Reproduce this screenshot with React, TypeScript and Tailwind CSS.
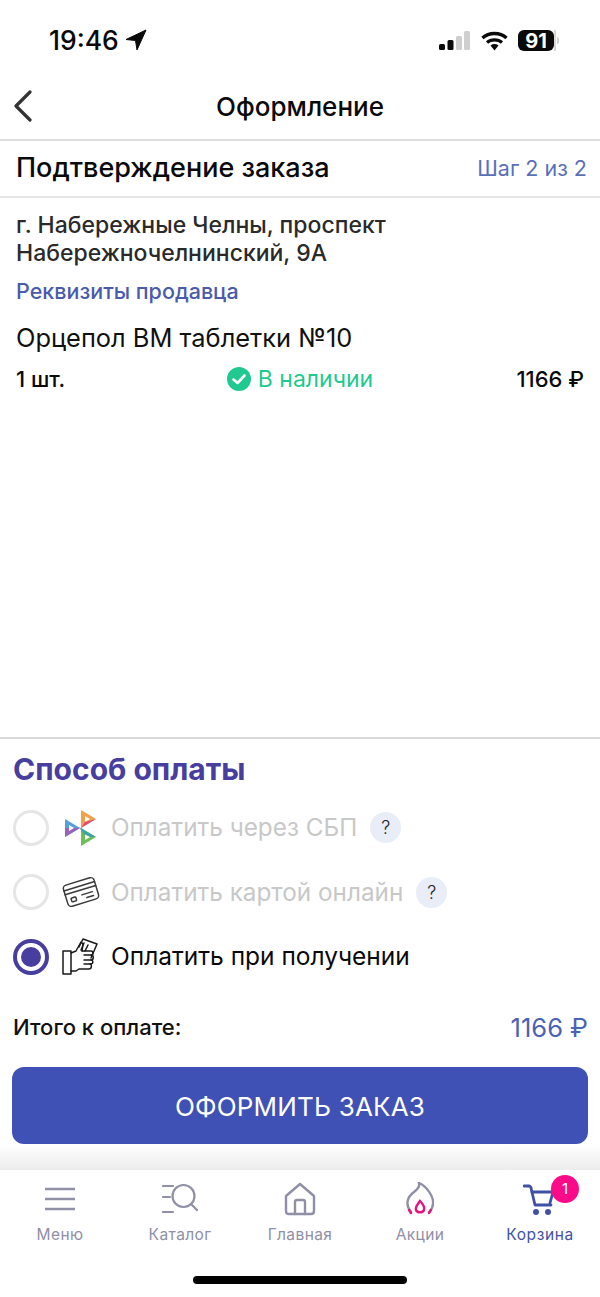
function LocationArrow() {
  return (
    <svg width="22" height="22" viewBox="0 0 22 22" className="ml-[6px]">
      <path d="M21 1 L1 10.5 L10.5 11.5 L12 21 Z" fill="#0a0a0a" stroke="#0a0a0a" strokeWidth="1" strokeLinejoin="round" />
    </svg>
  );
}

function StatusIcons() {
  return (
    <div className="flex items-center">
      <svg width="31" height="20" viewBox="0 0 31 20">
        <rect x="0" y="13" width="6" height="6" rx="1.5" fill="#0a0a0a" />
        <rect x="8.5" y="9" width="6" height="10" rx="1.5" fill="#0a0a0a" />
        <rect x="17" y="5" width="6" height="14" rx="1.5" fill="#cfcfcf" />
        <rect x="25" y="0" width="6" height="19" rx="1.5" fill="#cfcfcf" />
      </svg>
      <svg width="27" height="20" viewBox="0 0 27 20" className="ml-[11px]">
        <path d="M1.5 7 C8 1 19 1 25.5 7" fill="none" stroke="#0a0a0a" strokeWidth="3.4" />
        <path d="M6 11.5 C10 8 17 8 21 11.5" fill="none" stroke="#0a0a0a" strokeWidth="3.2" />
        <path d="M9.5 14.5 L13.5 19.5 L17.5 14.5 C15 12.6 12 12.6 9.5 14.5 Z" fill="#0a0a0a" />
      </svg>
      <div className="ml-[10px] flex items-center">
        <div className="flex h-[21px] w-[36px] items-center justify-center rounded-[6px] bg-[#0a0a0a] text-[20px] leading-none font-bold text-white">91</div>
        <div className="h-[21px] w-[2px] bg-[#d8d8d8]" />
        <div className="ml-[1px] h-[7px] w-[2px] rounded-r-sm bg-[#cfcfcf]" />
      </div>
    </div>
  );
}

function SbpLogo() {
  return (
    <svg width="31" height="36" viewBox="0 0 31 36">
      <polygon points="16,0 31,9 16,18" fill="#f0a24a" />
      <polygon points="20,6 25,9 20,12" fill="#fff" />
      <polygon points="20,12 31,9 16,18" fill="#e5487a" />
      <polygon points="0,9 15,18 0,27" fill="#5a9ed8" />
      <polygon points="0,18 15,18 0,27" fill="#9a62b8" />
      <polygon points="4,15 9,18 4,21" fill="#fff" />
      <polygon points="16,18 31,27 16,36" fill="#6cbf5a" />
      <polygon points="14,17 31,27 21,27" fill="#3fa4a0" />
      <polygon points="20,24.5 25,27 20,30" fill="#fff" />
    </svg>
  );
}

function CardIcon() {
  return (
    <svg width="38" height="34" viewBox="0 0 38 34" fill="none" stroke="#3a3a3a" strokeWidth="1.5" strokeLinecap="round" strokeLinejoin="round">
      <g transform="rotate(-17 19 17)">
        <rect x="3" y="6" width="32" height="22" rx="3.5" />
        <path d="M3 11 H35 M3 15 H35" />
        <rect x="7.5" y="20" width="5" height="4" rx="1" />
        <path d="M19 20 H30 M23 24 H30" />
      </g>
    </svg>
  );
}

function HandIcon() {
  return (
    <svg width="36" height="38" viewBox="0 0 36 38" fill="none" stroke="#1a1a1a" strokeWidth="1.5" strokeLinecap="round" strokeLinejoin="round">
      <path d="M1 13 H9 V36 H1 Z" />
      <path d="M9 15 L14 13 L19 4 L21 6 L20 13" />
      <path d="M17 9 L21 1 L35 6 L29 20" />
      <path d="M22 5 L19 12 M26 7 L23 13" />
      <path d="M20 13 H29 C31.5 13 31.5 17 29 17 H22" />
      <path d="M29 17 C32 17 32 22 29 22 H22" />
      <path d="M29 22 C31.5 22 31.5 26 28.5 26 H22" />
      <path d="M28 26 C30 26 30 31 27 31 H17 L14 33 H9" />
    </svg>
  );
}

function Radio({ checked }: { checked?: boolean }) {
  if (checked) {
    return (
      <div className="flex h-[36px] w-[36px] shrink-0 items-center justify-center rounded-full border-[4px] border-[#473e9f]">
        <div className="h-[20px] w-[20px] rounded-full bg-[#473e9f]" />
      </div>
    );
  }
  return <div className="h-[36px] w-[36px] shrink-0 rounded-full border-[3px] border-[#e6e6e6]" />;
}

function HelpBadge() {
  return (
    <div className="flex h-[31px] w-[31px] items-center justify-center rounded-full bg-[#e9edf7] text-[18px] font-light text-[#222]">?</div>
  );
}

function PayRow({ icon, iconClass, label, checked, help }: { icon: React.ReactNode; iconClass: string; label: string; checked?: boolean; help?: boolean }) {
  return (
    <div className="flex h-[64.5px] items-center">
      <Radio checked={checked} />
      <div className={iconClass}>{icon}</div>
      <span className={checked ? "text-[24.5px] text-[#0a0a0a]" : "text-[24.3px] text-[#c8c8c8]"}>{label}</span>
      {help && <div className="ml-[13px]"><HelpBadge /></div>}
    </div>
  );
}

function NavItem({ label, active, children }: { label: string; active?: boolean; children: React.ReactNode }) {
  return (
    <div className="flex w-[120px] flex-col items-center">
      <div className="flex h-[40px] items-center justify-center">{children}</div>
      <span className={active ? "mt-[6px] text-[15.5px] leading-[20px] font-normal tracking-[0.6px] text-[#3f51a5]" : "mt-[6px] text-[15.5px] leading-[20px] tracking-[0.4px] text-[#8f8fa6]"}>{label}</span>
    </div>
  );
}

export default function App() {
  return (
    <div className="flex h-[1297px] w-[600px] flex-col overflow-hidden bg-white font-['Inter','Liberation_Sans',sans-serif]">
      {/* status bar */}
      <div className="flex h-[72px] shrink-0 items-start justify-between pt-[23px] pr-[41px] pl-[49px]">
        <div className="flex items-center text-[26.5px] leading-[34px] font-medium text-[#0a0a0a]">
          19:46
          <LocationArrow />
        </div>
        <div className="pt-[7px]"><StatusIcons /></div>
      </div>

      {/* header */}
      <div className="relative flex h-[69px] shrink-0 items-center justify-center border-b-2 border-[#dedede] pt-[2px]">
        <svg width="20" height="32" viewBox="0 0 20 32" fill="none" stroke="#333" strokeWidth="3.2" strokeLinecap="round" strokeLinejoin="round" className="absolute top-[18px] left-[13px]">
          <path d="M17 2 L3 16 L17 30" />
        </svg>
        <span className="text-[26px] font-medium text-[#0a0a0a]">Оформление</span>
      </div>

      {/* step */}
      <div className="flex h-[57px] shrink-0 items-center justify-between border-b-2 border-[#e6e6e6] pr-[13px] pl-[16px]">
        <span className="text-[27px] font-medium text-[#0a0a0a]">Подтверждение заказа</span>
        <span className="text-[21.5px] text-[#5b6fb8]">Шаг 2 из 2</span>
      </div>

      {/* order */}
      <div className="flex flex-1 flex-col px-[16px] pt-[13px]">
        <div className="text-[23px] leading-[28px] font-medium text-[#2a2a2a]">
          г. Набережные Челны, проспект
          <br />
          Набережночелнинский, 9А
        </div>
        <div className="mt-[11px] text-[21.5px] leading-[26px] font-medium text-[#4a5bab]">Реквизиты продавца</div>
        <div className="mt-[19px] text-[25.4px] leading-[30px] text-[#111]">Орцепол ВМ таблетки №10</div>
        <div className="mt-[9px] grid grid-cols-3 items-center">
          <span className="text-[22px] font-medium text-[#0a0a0a]">1 шт.</span>
          <div className="flex items-center justify-center whitespace-nowrap">
            <svg width="24" height="24" viewBox="0 0 24 24">
              <circle cx="12" cy="12" r="12" fill="#1fc98f" />
              <path d="M6.5 12.5 L10.5 16 L17.5 8.5" fill="none" stroke="#fff" strokeWidth="2.6" strokeLinecap="round" strokeLinejoin="round" />
            </svg>
            <span className="ml-[7px] text-[23px] text-[#1fc98f]">В наличии</span>
          </div>
          <span className="text-right text-[22px] font-medium text-[#0a0a0a]">1166 ₽</span>
        </div>
      </div>

      {/* payment */}
      <div className="shrink-0 border-t-2 border-[#d8d8d8] pt-[11px] pr-[12px] pl-[13px]">
        <div className="text-[30px] leading-[38px] font-bold text-[#473e9f]">Способ оплаты</div>
        <div className="mt-[7px] flex flex-col">
          <PayRow icon={<SbpLogo />} iconClass="ml-[16px] w-[46px] shrink-0" label="Оплатить через СБП" help />
          <PayRow icon={<CardIcon />} iconClass="ml-[13px] w-[49px] shrink-0" label="Оплатить картой онлайн" help />
          <PayRow icon={<HandIcon />} iconClass="ml-[13px] w-[49px] shrink-0" label="Оплатить при получении" checked />
        </div>
        <div className="mt-[20px] flex items-center justify-between">
          <span className="text-[22px] font-medium text-[#111]">Итого к оплате:</span>
          <span className="text-[25.5px] text-[#4a62b5]">1166 ₽</span>
        </div>
        <button className="mt-[20px] -ml-[1px] flex h-[77px] w-[calc(100%+1px)] items-center justify-center rounded-[12px] bg-[#3f51b5] pt-[2px] text-[26px] tracking-[0.2px] text-white">
          ОФОРМИТЬ ЗАКАЗ
        </button>
      </div>

      <div className="h-[26px] shrink-0 bg-gradient-to-b from-white to-[#ececec]" />

      {/* tab bar */}
      <div className="relative h-[127px] shrink-0 bg-white">
        <div className="flex pt-[9px]">
          <NavItem label="Меню">
            <svg width="32" height="24" viewBox="0 0 32 24" stroke="#8f8fa6" strokeWidth="2.4">
              <path d="M1 2 H31 M1 12 H31 M1 22 H31" />
            </svg>
          </NavItem>
          <NavItem label="Каталог">
            <svg width="36" height="32" viewBox="0 0 36 32" fill="none" stroke="#8f8fa6" strokeWidth="2.2" strokeLinecap="round">
              <circle cx="21.5" cy="13" r="11" />
              <path d="M29 21 L35 27 M1 3 H11 M1 14 H8 M1 29 H11" />
            </svg>
          </NavItem>
          <NavItem label="Главная">
            <svg width="32" height="34" viewBox="0 0 32 34" fill="none" stroke="#8f8fa6" strokeWidth="2.4" strokeLinecap="round" strokeLinejoin="round">
              <path d="M2 14 L16 2 L30 14 V29 C30 31 29 32 27 32 H5 C3 32 2 31 2 29 Z" />
              <path d="M11 32 V20 C11 19 12 18 13 18 H19 C20 18 21 19 21 20 V32" />
            </svg>
          </NavItem>
          <NavItem label="Акции">
            <svg width="28" height="34" viewBox="0 0 28 34" fill="none" strokeWidth="2.4" strokeLinecap="round">
              <path d="M5 30 C-1 23 1 15 8 10 C12 7 14 4 13 1 C20 4 28 14 27 22 C27 25 25 28 23 30" stroke="#8f8fa6" />
              <path d="M14 19 C17 22 19 25 18 28 C17 31 11 31 10 28 C9 25 12 22 14 19 Z" stroke="#e6147f" />
              <path d="M3 28 L5 31 M25 28 L23 31" stroke="#e6147f" />
            </svg>
          </NavItem>
          <NavItem label="Корзина" active>
            <svg width="32" height="32" viewBox="0 0 32 32" fill="none" stroke="#3f51a5" strokeWidth="2.8" strokeLinecap="round" strokeLinejoin="round" className="-ml-[2px]">
              <path d="M1 3 H6 C7 3 8 4 8 5 L12 22 H28" />
              <path d="M9 9 H30 L27 20" />
              <circle cx="13" cy="29" r="1.6" fill="#3f51a5" />
              <circle cx="25" cy="29" r="1.6" fill="#3f51a5" />
            </svg>
          </NavItem>
        </div>
        <div className="absolute top-[5px] left-[551px] flex h-[28px] w-[28px] items-center justify-center rounded-full bg-[#fb0a8a] text-[15px] text-white">1</div>
        <div className="absolute top-[106px] left-[193px] h-[8px] w-[214px] rounded-full bg-black" />
      </div>
    </div>
  );
}
